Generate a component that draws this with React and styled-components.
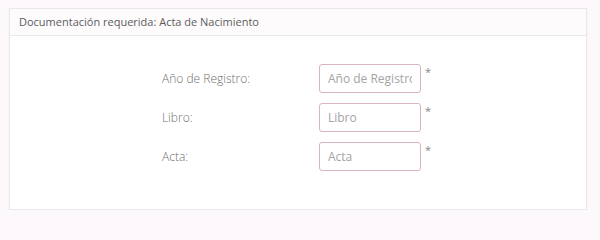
import styled, { createGlobalStyle } from "styled-components";

const GlobalStyle = createGlobalStyle`
  html, body {
    margin: 0;
    padding: 0;
    background: #fdf8fb;
  }
  body {
    font-family: "Open Sans", "Liberation Sans", sans-serif;
  }
`;

const fields = [
  { label: "Año de Registro:", placeholder: "Año de Registro" },
  { label: "Libro:", placeholder: "Libro" },
  { label: "Acta:", placeholder: "Acta" },
];

export default function App() {
  return (
    <>
      <GlobalStyle />
      <Page>
        <Panel>
          <PanelHeader>Documentación requerida: Acta de Nacimiento</PanelHeader>
          <PanelBody>
            <Form>
              {fields.map((f) => (
                <Row key={f.label}>
                  <Label>{f.label}</Label>
                  <InputWrap>
                    <Input placeholder={f.placeholder} />
                    <Required>*</Required>
                  </InputWrap>
                </Row>
              ))}
            </Form>
          </PanelBody>
        </Panel>
      </Page>
    </>
  );
}

const Page = styled.div`
  padding: 8px 13px 0 9px;
`;

const Panel = styled.div`
  background: #ffffff;
  border: 1px solid #ebe8ea;
  box-shadow: 0 1px 2px rgba(0, 0, 0, 0.04);
  height: 202px;
  box-sizing: border-box;
`;

const PanelHeader = styled.div`
  height: 27px;
  box-sizing: border-box;
  padding: 6px 9px;
  background: #fdfbfc;
  border-bottom: 1px solid #ebe8ea;
  font-size: 11px;
  color: #5c5c5c;
  line-height: 14px;
`;

const PanelBody = styled.div`
  display: flex;
  justify-content: center;
  padding-top: 28px;
`;

const Form = styled.div`
  display: flex;
  flex-direction: column;
  gap: 10px;
  margin-left: -3px;
`;

const Row = styled.div`
  display: grid;
  grid-template-columns: 157px auto;
  align-items: center;
`;

const Label = styled.label`
  font-size: 12px;
  color: #707070;
  font-weight: 300;
`;

const InputWrap = styled.div`
  display: flex;
  align-items: flex-start;
  gap: 4px;
`;

const Input = styled.input`
  width: 102px;
  height: 29px;
  box-sizing: border-box;
  border: 1px solid #d8b3c1;
  border-radius: 3px;
  padding: 0 8px;
  font-family: "Open Sans", "Liberation Sans", sans-serif;
  font-size: 12px;
  color: #555;
  background: #fff;
  outline: none;
  &::placeholder {
    color: #a4a4a4;
  }
`;

const Required = styled.span`
  font-size: 11px;
  color: #888;
  line-height: 12px;
  margin-top: 2px;
`;
